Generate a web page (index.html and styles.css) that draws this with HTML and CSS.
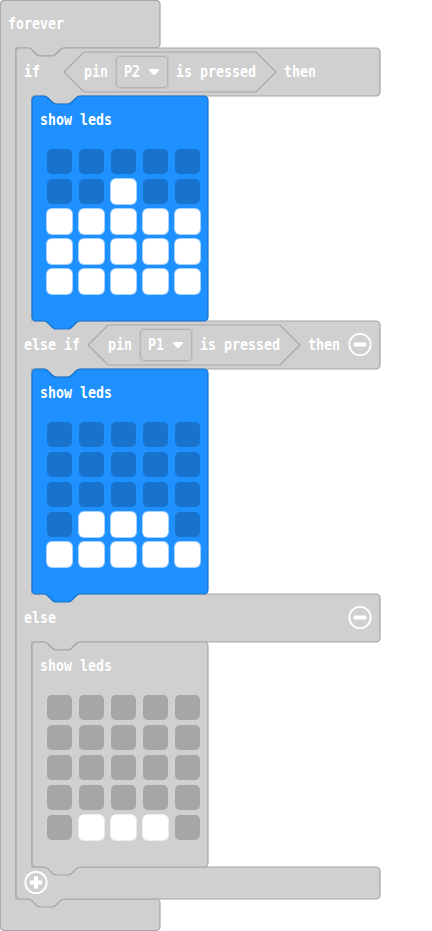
FILE: index.html
```
<!DOCTYPE html>
<html lang="en">
<head>
<meta charset="utf-8">
<title>Blocks</title>
<link rel="stylesheet" href="styles.css">
</head>
<body>
<main class="workspace">
  <section class="block forever">
    <svg class="shape grey" width="161" height="931" viewBox="0 0 161 931"><path d="M.3 4.300a4 4 0 0 1 4-4H156a4 4 0 0 1 4 4V44a4 4 0 0 1-4 4H64c-2 0-3 1-4 2l-4 4c-1 1-2 2-4 2H40c-2 0-3-1-4-2l-4-4c-1-1-2-2-4-2H16V899H156a4 4 0 0 1 4 4V926.500a4 4 0 0 1-4 4H4.300a4 4 0 0 1-4-4z"/></svg>
    <header class="row row-event"><span>forever</span></header>
    <section class="block conditional">
      <svg class="shape grey" width="366" height="861" viewBox="0 0 366 861"><path d="M0 4a4 4 0 0 1 4-4H12c2 0 3 1 4 2l4 4c1 1 2 2 4 2h12c2 0 3-1 4-2l4-4c1-1 2-2 4-2H360a4 4 0 0 1 4 4V44a4 4 0 0 1-4 4H64c-2 0-3 1-4 2l-4 4c-1 1-2 2-4 2H40c-2 0-3-1-4-2l-4-4c-1-1-2-2-4-2H16V273H360a4 4 0 0 1 4 4V317a4 4 0 0 1-4 4H64c-2 0-3 1-4 2l-4 4c-1 1-2 2-4 2H40c-2 0-3-1-4-2l-4-4c-1-1-2-2-4-2H16V546H360a4 4 0 0 1 4 4V590a4 4 0 0 1-4 4H64c-2 0-3 1-4 2l-4 4c-1 1-2 2-4 2H40c-2 0-3-1-4-2l-4-4c-1-1-2-2-4-2H16V819H360a4 4 0 0 1 4 4V847a4 4 0 0 1-4 4H48c-2 0-3 1-4 2l-4 4c-1 1-2 2-4 2H24c-2 0-3-1-4-2l-4-4c-1-1-2-2-4-2H4a4 4 0 0 1-4-4z"/></svg>
      <header class="row">
        <span class="keyword">if</span>
        <div class="condition">
          <svg class="shape hex" width="212" height="40" viewBox="0 0 212 40"><path d="M20 0H192L212 20 192 40H20L0 20z"/></svg>
          <span>pin</span>
          <div class="field"><span>P2</span><svg width="12" height="8" viewBox="0 0 12 8"><path d="M1.800 1h8.400q1.500 0 .5 1.500L7.200 6.600q-1.200 1-2.400 0L1.300 2.500Q.3 1 1.800 1z"/></svg></div>
          <span>is pressed</span>
        </div>
        <span>then</span>
      </header>
      <section class="block leds blue">
        <svg class="shape" width="178" height="235" viewBox="0 0 178 235"><path d="M0 4a4 4 0 0 1 4-4H12c2 0 3 1 4 2l4 4c1 1 2 2 4 2h12c2 0 3-1 4-2l4-4c1-1 2-2 4-2H172a4 4 0 0 1 4 4V221a4 4 0 0 1-4 4H48c-2 0-3 1-4 2l-4 4c-1 1-2 2-4 2H24c-2 0-3-1-4-2l-4-4c-1-1-2-2-4-2H4a4 4 0 0 1-4-4z"/></svg>
        <header class="row row-leds"><span>show leds</span></header>
        <div class="grid"><i></i><i></i><i></i><i></i><i></i><i></i><i></i><i class="on"></i><i></i><i></i><i class="on"></i><i class="on"></i><i class="on"></i><i class="on"></i><i class="on"></i><i class="on"></i><i class="on"></i><i class="on"></i><i class="on"></i><i class="on"></i><i class="on"></i><i class="on"></i><i class="on"></i><i class="on"></i><i class="on"></i></div>
      </section>
      <header class="row">
        <span class="keyword">else if</span>
        <div class="condition">
          <svg class="shape hex" width="212" height="40" viewBox="0 0 212 40"><path d="M20 0H192L212 20 192 40H20L0 20z"/></svg>
          <span>pin</span>
          <div class="field"><span>P1</span><svg width="12" height="8" viewBox="0 0 12 8"><path d="M1.800 1h8.400q1.500 0 .5 1.500L7.200 6.600q-1.200 1-2.400 0L1.300 2.500Q.3 1 1.800 1z"/></svg></div>
          <span>is pressed</span>
        </div>
        <span>then</span>
        <svg class="toggle" width="24" height="24" viewBox="0 0 24 24"><circle cx="12" cy="11.500" r="10.700"/><rect x="5.700" y="9.400" width="12.600" height="4.200" rx="1"/></svg>
      </header>
      <section class="block leds blue">
        <svg class="shape" width="178" height="235" viewBox="0 0 178 235"><path d="M0 4a4 4 0 0 1 4-4H12c2 0 3 1 4 2l4 4c1 1 2 2 4 2h12c2 0 3-1 4-2l4-4c1-1 2-2 4-2H172a4 4 0 0 1 4 4V221a4 4 0 0 1-4 4H48c-2 0-3 1-4 2l-4 4c-1 1-2 2-4 2H24c-2 0-3-1-4-2l-4-4c-1-1-2-2-4-2H4a4 4 0 0 1-4-4z"/></svg>
        <header class="row row-leds"><span>show leds</span></header>
        <div class="grid"><i></i><i></i><i></i><i></i><i></i><i></i><i></i><i></i><i></i><i></i><i></i><i></i><i></i><i></i><i></i><i></i><i class="on"></i><i class="on"></i><i class="on"></i><i></i><i class="on"></i><i class="on"></i><i class="on"></i><i class="on"></i><i class="on"></i></div>
      </section>
      <header class="row">
        <span>else</span>
        <svg class="toggle" width="24" height="24" viewBox="0 0 24 24"><circle cx="12" cy="11.500" r="10.700"/><rect x="5.700" y="9.400" width="12.600" height="4.200" rx="1"/></svg>
      </header>
      <section class="block leds grey">
        <svg class="shape" width="178" height="235" viewBox="0 0 178 235"><path d="M0 4a4 4 0 0 1 4-4H12c2 0 3 1 4 2l4 4c1 1 2 2 4 2h12c2 0 3-1 4-2l4-4c1-1 2-2 4-2H172a4 4 0 0 1 4 4V221a4 4 0 0 1-4 4H48c-2 0-3 1-4 2l-4 4c-1 1-2 2-4 2H24c-2 0-3-1-4-2l-4-4c-1-1-2-2-4-2H4a4 4 0 0 1-4-4z"/></svg>
        <header class="row row-leds"><span>show leds</span></header>
        <div class="grid"><i></i><i></i><i></i><i></i><i></i><i></i><i></i><i></i><i></i><i></i><i></i><i></i><i></i><i></i><i></i><i></i><i></i><i></i><i></i><i></i><i></i><i class="on"></i><i class="on"></i><i class="on"></i><i></i></div>
      </section>
      <footer class="row row-add">
        <svg class="icon" width="24" height="24" viewBox="0 0 24 24"><circle cx="12" cy="11.500" r="10.700"/><path transform="translate(0 -.5)" d="M10.900 5.800h2.200q.9 0 .9.900V10h3.300q.9 0 .9.900v2.200q0 .9-.9.900H14v3.300q0 .9-.9.900h-2.200q-.9 0-.9-.9V14H6.700q-.9 0-.9-.9v-2.200q0-.9.900-.9H10V6.700q0-.9.900-.9z"/></svg>
      </footer>
    </section>
  </section>
</main>
</body>
</html>
```

FILE: styles.css
```
* { box-sizing: border-box; }

body {
  margin: 0;
  background: #fff;
}

.workspace {
  width: 432px;
  height: 931px;
  overflow: hidden;
  color: #fff;
  font: bold 13.29px/20px "DejaVu Sans Mono", monospace;
  white-space: nowrap;
}

.workspace span { transform: translateY(.8px) scaleY(1.15); }

.block {
  position: relative;
}

.shape {
  position: absolute;
  top: 0;
  left: 0;
  z-index: -1;
  overflow: visible;
  stroke-width: 1.2;
}

.block, .condition { isolation: isolate; }

.grey { fill: #d0d0d0; stroke: #a6a6a6; --off: #a6a6a6; }
.blue { fill: #1e90ff; stroke: #1873cc; --off: #1873cc; }

.forever { width: 160px; height: 931px; }

.row {
  display: flex;
  align-items: center;
  gap: 8px;
  width: 364px;
  height: 48px;
  padding: 0 8px;
}

.row-event { width: 160px; }

.conditional {
  width: 364px;
  margin-left: 16px;
}

.keyword { min-width: 32px; }

.condition {
  position: relative;
  display: flex;
  align-items: center;
  gap: 8px;
  width: 212px;
  height: 40px;
  padding: 0 20px;
}

.hex { fill: #d0d0d0; stroke: #a6a6a6; }

.field {
  display: flex;
  align-items: center;
  gap: 8px;
  width: 52px;
  height: 32px;
  padding-left: 7px;
  border: 1px solid #b4b4b4;
  border-radius: 4px;
  box-shadow: 0 0 0 1px rgba(166, 166, 166, .3);
}

.field svg, .toggle, .icon {
  flex: none;
  fill: #fff;
}

.toggle { margin-left: auto; }

.toggle circle, .icon circle {
  fill: none;
  stroke: #fff;
  stroke-width: 1.8;
}

.toggle rect, .icon path, .field svg { stroke: none; }

.leds {
  width: 176px;
  height: 225px;
  margin-left: 16px;
}

.row-leds { width: 176px; }

.grid {
  display: grid;
  grid-template-columns: repeat(5, 25px);
  grid-auto-rows: 25px;
  gap: 5px 7px;
  padding: 5px 0 0 15px;
}

.grid i {
  border-radius: 5px;
  background: var(--off);
}

.grid .on {
  background: #fff;
  box-shadow: 0 0 0 1px rgba(255, 255, 255, .6);
}

.row-add {
  height: 32px;
  padding-left: 8px;
}
```
